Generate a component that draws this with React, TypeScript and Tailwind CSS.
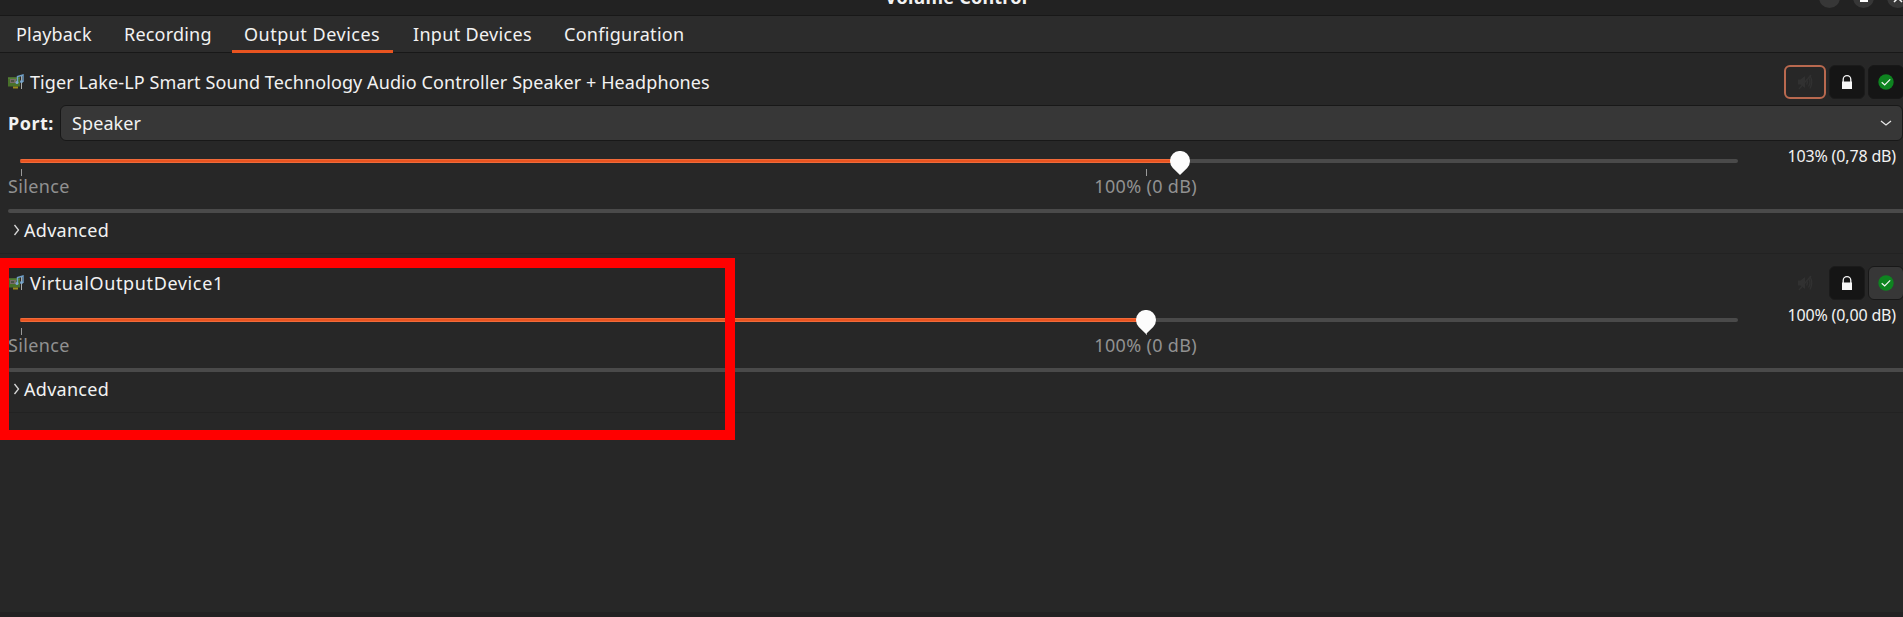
import type { ReactNode } from 'react';

function Text({ children, className = '' }: { children: ReactNode; className?: string }) {
  return <span className={`whitespace-nowrap text-[18px] leading-6 ${className}`}>{children}</span>;
}

function CardIcon() {
  return (
    <svg width="16" height="16" viewBox="0 0 16 16" className="shrink-0">
      <rect x="0" y="3.5" width="12" height="9" fill="#48702a" />
      <rect x="0" y="3.5" width="12" height="1" fill="#5d8a3c" />
      <rect x="2" y="5" width="6" height="4" fill="#786c68" />
      <rect x="3" y="6" width="3" height="2" fill="#4c5344" />
      <rect x="5" y="12.5" width="5" height="2" fill="#9a8a1c" />
      <path d="M13.5 2v13" stroke="#a9acaa" strokeWidth="1" />
      <path d="M9.5 9V2.5L15 1v7" stroke="#6f9fc8" strokeWidth="1.4" fill="none" />
      <circle cx="9" cy="8.5" r="1.5" fill="#7ba8ce" />
      <circle cx="13.5" cy="7.5" r="1.5" fill="#7ba8ce" />
    </svg>
  );
}

function MuteIcon() {
  return (
    <svg width="16" height="16" viewBox="0 0 16 16" fill="none" stroke="#313131" strokeWidth="1.3">
      <path d="M1 5.5h2.500L8 2v12l-4.500-3.500H1z" fill="#313131" stroke="none" />
      <path d="M9.500 5.500q1.800 2.500 0 5M11.500 3.500q3 4.500 0 9M13 1.500q3.500 6.500 0 13" />
      <path d="M14 1L2 15" />
    </svg>
  );
}

function LockIcon() {
  return (
    <svg width="16" height="16" viewBox="0 0 16 16">
      <path d="M4.200 8V5.500a3.800 3.800 0 0 1 7.600 0V8" stroke="#f7f7f7" strokeWidth="1.300" fill="none" />
      <rect x="3" y="7.500" width="10" height="7.500" fill="#f7f7f7" />
    </svg>
  );
}

function CheckIcon() {
  return (
    <svg width="16" height="16" viewBox="0 0 16 16">
      <circle cx="8" cy="8" r="7.700" fill="#0e8420" />
      <path d="M3.700 8.200l3 2.800 5.500-5.700" stroke="#f7f7f7" strokeWidth="1.200" fill="none" />
    </svg>
  );
}

function Buttons({ focused }: { focused: boolean }) {
  return (
    <div className="-mr-px flex h-[34px] shrink-0">
      <div
        className={`flex w-[42px] items-center justify-center rounded-[6px] ${focused ? 'border-2 border-[#b9694f]' : ''}`}
      >
        <MuteIcon />
      </div>
      <div className="ml-[3px] flex w-9 items-center justify-center rounded-[6px] border border-[#1b1b1b] bg-[#151515]">
        <LockIcon />
      </div>
      <div
        className={`ml-[3px] flex w-9 items-center justify-center rounded-[6px] border border-[#181818] ${focused ? 'bg-[#151515]' : 'bg-[#373737]'}`}
      >
        <CheckIcon />
      </div>
    </div>
  );
}

function Slider({ value, position }: { value: string; position: number }) {
  return (
    <div className="flex h-[68px] pl-2">
      <div className="relative w-[1742px] shrink-0">
        <div className="ml-3 mt-[18px] flex h-1 w-[1718px] overflow-hidden rounded-sm bg-[#4a4a4a]">
          <div
            className="border-y border-[#f06a3a] bg-[#e95420]"
            style={{ width: position - 20 }}
          />
        </div>
        <svg className="absolute top-[10px]" style={{ left: position - 18 }} width="20" height="24" viewBox="0 0 20 24">
          <path d="M10 24L2.800 16.900A10 10 0 1 1 17.200 16.900Z" fill="#fcfcfc" />
        </svg>
        <div className="ml-[13px] mt-[6px] flex h-[7px] justify-between">
          <div className="w-px bg-[#9a9a9a]" />
          <div className="mr-[603px] w-px bg-[#9a9a9a]" />
        </div>
        <div className="-mt-[2px] flex justify-between text-[#919191]">
          <Text className="tracking-[0.35px]">Silence</Text>
          <Text className="mr-[553px] tracking-[0.33px]">100% (0 dB)</Text>
        </div>
      </div>
      <div className="flex grow justify-end pr-[7px] pt-[3px] text-[#f2f2f2]">
        <Text className="text-[16px]! tracking-[-0.15px]">{value}</Text>
      </div>
    </div>
  );
}

function Advanced() {
  return (
    <div className="flex flex-col">
      <div className="ml-2 h-1 rounded-l-sm bg-[#4a4a4a]" />
      <div className="flex h-[33px] items-center pl-3">
        <svg width="12" height="12" viewBox="0 0 12 12" fill="none" stroke="#d8d8d8" strokeWidth="1.300">
          <path d="M2.500 1l4 5-4 5" />
        </svg>
        <Text className="tracking-[0.28px]">Advanced</Text>
      </div>
    </div>
  );
}

const tabs = [
  { label: 'Playback', className: 'ml-4 w-[108px] tracking-[0.18px]' },
  { label: 'Recording', className: 'w-[108px] tracking-[0.2px]' },
  { label: 'Output Devices', className: 'w-[161px] border-b-[3px] border-[#e95420] pl-3 tracking-[0.5px]' },
  { label: 'Input Devices', className: 'ml-5 w-[151px] tracking-[0.32px]' },
  { label: 'Configuration', className: 'tracking-[0.28px]' },
];

export default function App() {
  return (
    <div
      className="relative flex h-[617px] w-[1903px] flex-col overflow-hidden bg-[#272727] text-[#f2f2f2]"
      style={{ fontFamily: '"Noto Sans", "Open Sans", sans-serif' }}
    >
      <header className="flex h-4 shrink-0 items-end overflow-hidden border-b border-[#181818] bg-[#222222]">
        <div className="w-[1819px] shrink-0 pb-[5px] pl-[885px]">
          <Text className="font-bold tracking-[0.22px]">Volume Control</Text>
        </div>
        <div className="mb-[7px] flex shrink-0 gap-[13px]">
          <div className="size-[21px] shrink-0 rounded-full bg-[#373737]" />
          <div className="flex size-[21px] shrink-0 items-center justify-center rounded-full bg-[#373737]">
            <div className="size-2 border-2 border-white" />
          </div>
          <div className="flex size-[21px] shrink-0 items-center justify-center rounded-full bg-[#373737]">
            <svg width="10" height="10" viewBox="0 0 10 10" stroke="#f7f7f7" strokeWidth="1.500">
              <path d="M1 1l8 8M9 1L1 9" />
            </svg>
          </div>
        </div>
      </header>
      <nav className="flex h-[37px] shrink-0 border-b border-[#181818] bg-[#2c2c2c]">
        {tabs.map((tab) => (
          <div key={tab.label} className={`-mb-px h-[37px] pt-[6px] ${tab.className}`}>
            <Text>{tab.label}</Text>
          </div>
        ))}
      </nav>
      <section className="flex h-[201px] shrink-0 flex-col border-b border-[#222222]">
        <div className="flex h-[52px] items-center pl-2 pt-[6px]">
          <CardIcon />
          <Text className="ml-[6px] grow tracking-[0.1px]">
            Tiger Lake-LP Smart Sound Technology Audio Controller Speaker + Headphones
          </Text>
          <Buttons focused />
        </div>
        <div className="flex h-9 items-center pl-2">
          <Text className="w-[52px] font-bold tracking-[0.5px]">Port:</Text>
          <div className="flex h-9 grow items-center justify-between rounded-[6px] border border-[#181818] bg-[#373737] pl-[11px] pr-[10px]">
            <Text className="tracking-[0.1px]">Speaker</Text>
            <svg width="12" height="12" viewBox="0 0 12 12" fill="none" stroke="#e8e8e8" strokeWidth="1.300">
              <path d="M1 4l5 4 5-4" />
            </svg>
          </div>
        </div>
        <Slider value="103% (0,78 dB)" position={1180} />
        <Advanced />
      </section>
      <section className="flex h-[159px] shrink-0 flex-col border-b border-[#222222]">
        <div className="flex h-[46px] items-center pl-2 pt-[12px]">
          <CardIcon />
          <Text className="ml-[6px] grow tracking-[0.62px]">VirtualOutputDevice1</Text>
          <Buttons focused={false} />
        </div>
        <Slider value="100% (0,00 dB)" position={1146} />
        <Advanced />
      </section>
      <div className="mt-auto h-[5px] bg-[#222122]" />
      <div className="absolute -left-px top-[258px] h-[182px] w-[736px] border-10 border-[#ff0000]" />
    </div>
  );
}
